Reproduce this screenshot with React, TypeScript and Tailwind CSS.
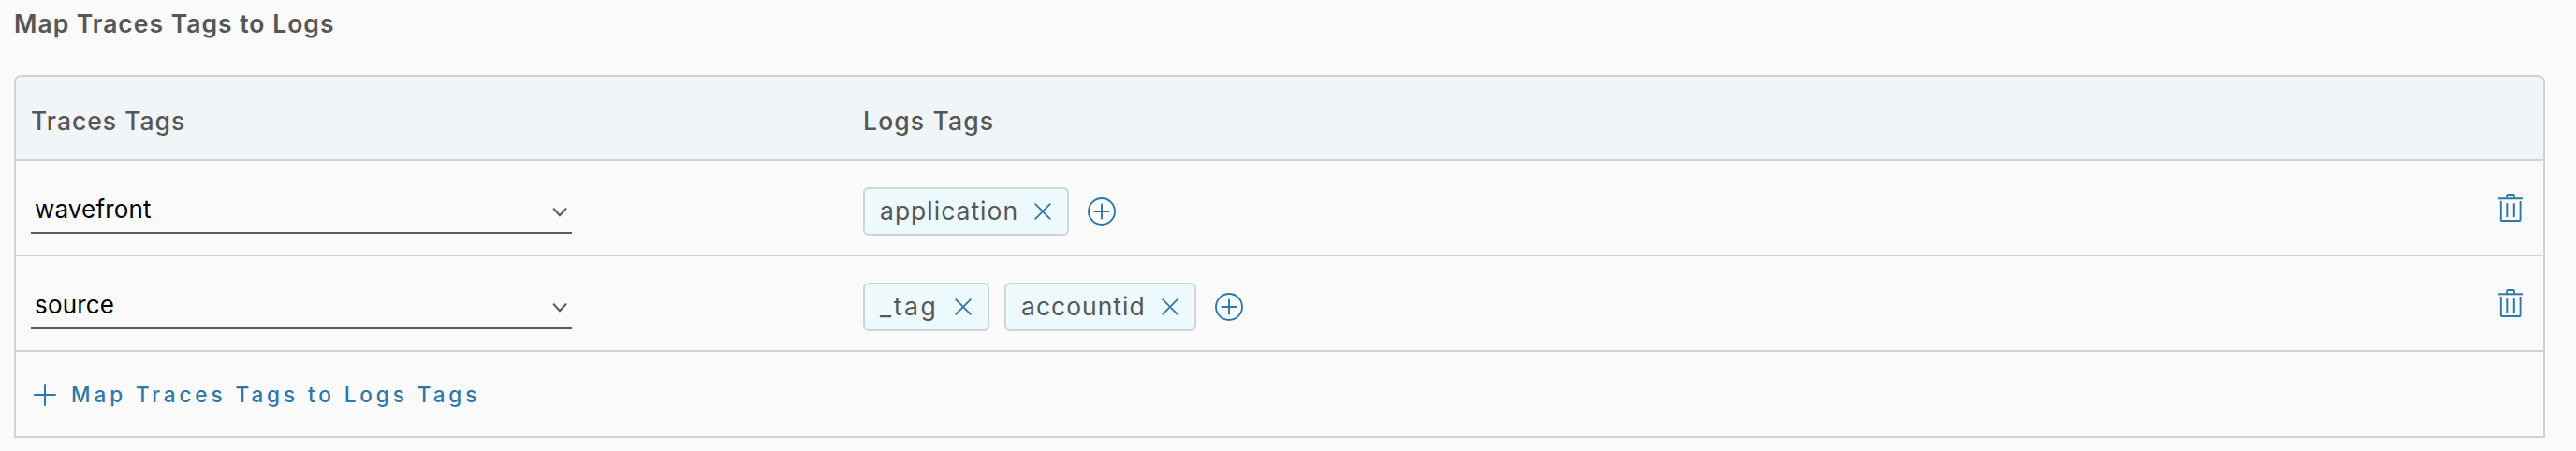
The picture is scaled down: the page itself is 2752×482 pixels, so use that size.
import type { ReactNode } from "react";

type Tag = { name: string; size: string };

function ChevronIcon() {
  return (
    <svg width="16" height="10" viewBox="0 0 16 10" fill="none" stroke="#5b5b5f" strokeWidth="2.1" strokeLinecap="round">
      <path d="M1.7 1.3 8 8.2 14.5 1.3" />
    </svg>
  );
}

function CloseIcon() {
  return (
    <svg width="18" height="18" viewBox="0 0 18 18" fill="none" stroke="#2d77ab" strokeWidth="1.8" strokeLinecap="round">
      <path d="M1.2 1.2 16.8 16.8M16.8 1.2 1.2 16.8" />
    </svg>
  );
}

function AddCircleIcon() {
  return (
    <svg width="30" height="30" viewBox="0 0 30 30" fill="none" stroke="#2d77ab" strokeWidth="1.9" strokeLinecap="round">
      <circle cx="15" cy="15" r="14" />
      <path d="M15 7.4V22.6M7.4 15H22.6" />
    </svg>
  );
}

function TrashIcon() {
  return (
    <svg width="26" height="30" viewBox="0 0 26 30" fill="none" stroke="#2d77ab" strokeWidth="2">
      <path d="M0 5.3H26" />
      <path d="M9.1 4.5V2.1Q9.1 1 10.2 1H15.9Q17 1 17 2.1V4.5" strokeWidth="1.8" />
      <path d="M2.8 8V27.4Q2.8 29 4.4 29H22Q23.6 29 23.6 27.4V8" strokeWidth="1.9" />
      <path d="M9.3 10.2V25M16.8 10.2V25" />
    </svg>
  );
}

function PlusIcon() {
  return (
    <svg width="24" height="24" viewBox="0 0 24 24" fill="none" stroke="#2d77ab" strokeWidth="2" strokeLinecap="round">
      <path d="M12 1V23M1 12H23" />
    </svg>
  );
}

function Chip({ name, size }: Tag) {
  return (
    <span className={`flex h-[52px] items-center justify-between rounded-[6px] border-2 border-[#ccd5d8] bg-[#eef9fe] pr-[17.5px] pl-4 ${size}`}>
      <span className="pb-0.5 text-[26.5px] leading-8 text-[#565656]">{name}</span>
      <button aria-label="Remove">
        <CloseIcon />
      </button>
    </span>
  );
}

function MappingRow({ source, tags }: { source: string; tags: Tag[] }) {
  return (
    <Row className="h-[102px] items-start">
      <div className="w-[905px] shrink-0 pt-[26px] pl-4">
        <div className="flex h-[52px] w-[578px] items-start justify-between border-b-2 border-[#5b5b5f] pt-[9.5px] pr-[5px] pl-1">
          <span className="text-[26px] leading-8 tracking-[0.16px] text-black">{source}</span>
          <span className="pt-[14.5px]">
            <ChevronIcon />
          </span>
        </div>
      </div>
      <div className="flex grow items-center pt-7">
        <div className="flex gap-4">
          {tags.map((tag) => (
            <Chip key={tag.name} {...tag} />
          ))}
        </div>
        <button className="ml-5" aria-label="Add tag">
          <AddCircleIcon />
        </button>
      </div>
      <button className="mt-[35px] mr-[22px]" aria-label="Delete">
        <TrashIcon />
      </button>
    </Row>
  );
}

function Row({ className, children }: { className: string; children: ReactNode }) {
  return <div className={`flex border-b-2 border-[#ccd3d8] ${className}`}>{children}</div>;
}

export default function App() {
  return (
    <main className="h-[482px] bg-[#fafafa] pt-[9px] pl-[15px] font-['Inter',sans-serif]">
      <h1 className="text-[26.5px] leading-8 font-semibold tracking-[1px] text-[#565656]">Map Traces Tags to Logs</h1>
      <section className="mt-[39px] h-[388px] w-[2704px] overflow-hidden rounded-t-[8px] border-2 border-[#ccd3d8]">
        <Row className="h-[90px] items-center bg-[#f1f5f8] pt-1.5 text-[26.5px] leading-8 font-medium text-[#565656]">
          <div className="w-[905px] pl-4 tracking-[1px]">Traces Tags</div>
          <div className="tracking-[1.15px]">Logs Tags</div>
        </Row>
        <MappingRow source="wavefront" tags={[{ name: "application", size: "w-[220px] tracking-[1px]" }]} />
        <MappingRow
          source="source"
          tags={[
            { name: "_tag", size: "w-[135px] tracking-[2.6px]" },
            { name: "accountid", size: "w-[205px] tracking-[1px]" },
          ]}
        />
        <button className="flex h-[90px] items-center pl-[19px] text-[#2d77ab]">
          <span className="pt-0.5">
            <PlusIcon />
          </span>
          <span className="ml-4 pt-px text-[22.5px] leading-7 font-medium tracking-[3.92px]">Map Traces Tags to Logs Tags</span>
        </button>
      </section>
    </main>
  );
}
